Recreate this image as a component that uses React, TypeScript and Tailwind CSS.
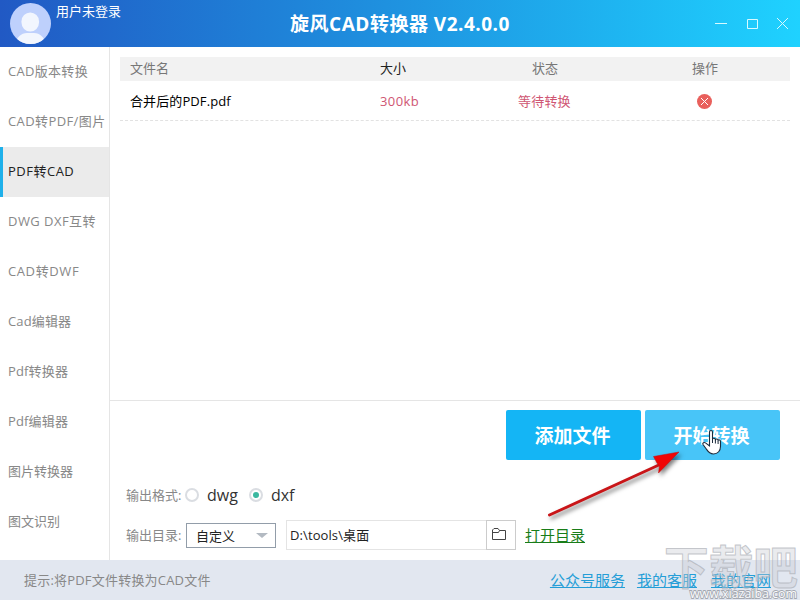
import { FC } from "react";
import clsx from "clsx";

type TMenuItem = { label: string, tracking?: string };

const menu: TMenuItem[] = [
  { label: "CAD版本转换", tracking: "tracking-[0.3px]" },
  { label: "CAD转PDF/图片", tracking: "tracking-[0.4px]" },
  { label: "PDF转CAD", tracking: "tracking-[0.5px]" },
  { label: "DWG DXF互转", tracking: "tracking-[0.45px]" },
  { label: "CAD转DWF", tracking: "tracking-[0.6px]" },
  { label: "Cad编辑器", tracking: "tracking-[0.15px]" },
  { label: "Pdf转换器", tracking: "tracking-[0.15px]" },
  { label: "Pdf编辑器", tracking: "tracking-[0.15px]" },
  { label: "图片转换器" },
  { label: "图文识别" },
];

const Header: FC = () => (
  <header className="relative flex h-[47px] items-start bg-linear-to-r from-[#2159c4] via-[#1f93e0] to-[#1fd2ff]">
    <svg className="ml-[10px] mt-[3px] shrink-0" width="41" height="41" viewBox="0 0 41 41">
      <defs>
        <clipPath id="avatar"><circle cx="20.5" cy="20.5" r="20.5" /></clipPath>
      </defs>
      <g clipPath="url(#avatar)">
        <rect width="41" height="41" fill="#bed0fc" />
        <rect x="11.5" y="9.5" width="17.500" height="19" rx="8.700" fill="#f2f6fe" />
        <path d="M5 41c2-7 6-11 12-11h7c6 0 10 4 12 11z" fill="#f2f6fe" />
      </g>
    </svg>
    <span className="ml-[5px] mt-[2px] text-[13px] leading-[18px] text-white">用户未登录</span>
    <h1 className="absolute inset-x-0 top-[10px] text-center text-[19px] leading-[28px] font-bold tracking-[0.5px] text-white">旋风CAD转换器 V2.4.0.0</h1>
    <svg className="ml-auto mr-[11px] mt-[17px]" width="75" height="14" viewBox="0 0 75 14" fill="none" stroke="#d8faff">
      <path d="M1 6.500h12M33.500 2.500h10v9h-10zM63 1l11 11M74 1l-11 11" />
    </svg>
  </header>
);

const Sidebar: FC = () => (
  <nav className="w-[110px] shrink-0 border-r border-[#e5e5e5]">
    {menu.map((item, i) => (
      <div
        key={item.label}
        className={clsx(
          "flex h-[50px] items-center pb-[2px] whitespace-nowrap",
          i === 2 ? "border-l-[3px] border-[#1fb0ea] bg-[#ebebeb] pl-[5px] text-[#222]" : "pl-2 text-[#888]",
          item.tracking
        )}
      >
        {item.label}
      </div>
    ))}
  </nav>
);

const FileTable: FC = () => (
  <div className="h-[353px] px-[10px] pt-[10px]">
    <div className="flex h-[24px] items-center bg-[#f2f2f2] pb-[2px] text-[#777]">
      <span className="w-[260px] pl-[10px]">文件名</span>
      <span className="w-[139px] text-[#222]">大小</span>
      <span className="w-[52px] text-center">状态</span>
      <span className="ml-[108px] w-[52px] text-center">操作</span>
    </div>
    <div className="flex h-[40px] items-center border-b border-dashed border-[#e2e2e2] text-[#cf5673]">
      <span className="w-[260px] pl-[10px] tracking-[0.1px] text-black">合并后的PDF.pdf</span>
      <span className="w-[138px] tracking-[0.4px]">300kb</span>
      <span className="w-[179px] tracking-[0.2px]">等待转换</span>
      <svg width="16" height="16" viewBox="0 0 16 16">
        <circle cx="7.500" cy="8.500" r="7.500" fill="#e9605c" />
        <path d="M4 5l7 7M11 5l-7 7" stroke="#fff" />
      </svg>
    </div>
  </div>
);

const Radio: FC<{ label: string, checked?: boolean }> = ({ label, checked }) => (
  <label className="flex items-center">
    <span className="flex size-[14px] items-center justify-center rounded-full border-2 border-[#dadde2]">
      {checked && <span className="size-[6px] rounded-full bg-[#3bb8a0]" />}
    </span>
    <span className="ml-2 text-[16px] text-[#333]">{label}</span>
  </label>
);

const Pointer: FC = () => (
  <svg className="absolute left-[701px] top-[429px]" width="24" height="28" viewBox="0 0 24 28">
    <path
      d="M8.500 3c0-2 3-2 3 0v7c.3-1.200 2.700-1 2.900.6 .6-1 2.500-.7 2.700.7 .7-.8 2.400-.3 2.400 1.200v5c0 4-2.500 7.500-7 7.500-4 0-5.500-2.400-7.200-5l-3.300-4.500c-.8-1.500 1-2.700 2.500-1.600l4 3z"
      fill="#fff"
      stroke="#1d2c3d"
      strokeWidth="1.100"
    />
    <path d="M11.500 10v4M14.400 11v3.500M17.100 12v3" stroke="#1d2c3d" fill="none" />
  </svg>
);

// Red arrow from the output row up to the start button
const Arrow: FC = () => (
  <svg className="absolute left-[540px] top-[445px] drop-shadow-[2px_3px_2px_rgba(0,0,0,0.5)]" width="150" height="80" viewBox="0 0 150 80">
    <path d="M9.500 70L121 19" stroke="#c91518" strokeWidth="3" strokeLinecap="round" />
    <path d="M139 7L113.500 11.500l3.500 6.500 2.500 3-1 7z" fill="#f00505" stroke="#c40a0c" strokeWidth=".5" />
  </svg>
);

const Watermark: FC = () => (
  <svg className="absolute left-[660px] top-[538px]" width="140" height="62" viewBox="0 0 140 62">
    <text x="4" y="46" textLength="134" lengthAdjust="spacingAndGlyphs" fontSize="46" fontWeight="700" fill="#c8ccd3" fillOpacity=".4" stroke="#a9acb3" strokeOpacity=".65" strokeWidth="1">下载吧</text>
    <text x="30" y="60" textLength="107" lengthAdjust="spacingAndGlyphs" fontSize="13" fill="#fafbfc" stroke="#a4a8b0" strokeWidth="1.800" paintOrder="stroke">www.xiazaiba.com</text>
  </svg>
);

export default function App() {
  return (
    <div className="relative flex h-[600px] w-[800px] flex-col overflow-hidden bg-white font-['Open_Sans','Noto_Sans_CJK_SC',sans-serif] text-[13px] leading-[20px]">
      <Header />
      <div className="flex h-[513px]">
        <Sidebar />
        <main className="flex-1">
          <FileTable />
          <section className="h-[160px] border-t border-[#e5e5e5]">
            <div className="flex justify-end gap-1 pt-[9px] pr-5 text-[19px] font-bold text-white">
              <button className="h-[50px] w-[135px] rounded-xs bg-[#14b5f5] pt-[2px] pr-[2px]">添加文件</button>
              <button className="h-[50px] w-[135px] rounded-xs bg-[#48c5f8] pt-[2px] pr-[2px]">开始转换</button>
            </div>
            <div className="mt-[25px] flex h-[20px] items-center pl-4">
              <span className="w-[59px] whitespace-nowrap text-[#888]">输出格式:</span>
              <Radio label="dwg" />
              <span className="w-[11px]" />
              <Radio label="dxf" checked />
            </div>
            <div className="mt-[15px] flex h-[30px] items-center pl-4">
              <span className="w-[60px] whitespace-nowrap text-[#888]">输出目录:</span>
              <div className="flex h-[25px] w-[90px] items-center border border-[#929da9] pt-[2px] pr-[7px] pl-[9px] text-[#222]">
                自定义
                <span className="ml-auto mb-[2px] border-x-[6px] border-t-[5px] border-x-transparent border-t-[#b3bac2]" />
              </div>
              <div className="ml-[10px] flex h-[30px] w-[200px] items-center border border-r-0 border-[#e4e4e4] pl-[3px] tracking-[0.1px] text-[#222]">D:\tools\桌面</div>
              <div className="flex h-[30px] w-[30px] items-center justify-center border border-[#ccc] pr-[3px] pb-[3px]">
                <svg width="15" height="14" viewBox="0 0 15 14" fill="none" stroke="#444">
                  <path d="M.5 12.500v-9.500l1.500-1.500h4l1.500 2h6v9zM.5 5.500h6l1-2" />
                </svg>
              </div>
              <a className="ml-[9px] text-[15px] text-[#197d19] underline">打开目录</a>
            </div>
          </section>
        </main>
      </div>
      <footer className="flex h-10 items-center bg-[#e2e7f0] pr-[29px] pl-6 text-[#888]">
        <span className="tracking-[0.2px]">提示:将PDF文件转换为CAD文件</span>
        <div className="ml-auto flex text-[15px] text-[#259ed7] underline">
          <a>公众号服务</a>
          <a className="ml-3">我的客服</a>
          <a className="ml-[14px]">我的官网</a>
        </div>
      </footer>
      <Arrow />
      <Pointer />
      <Watermark />
    </div>
  );
}
